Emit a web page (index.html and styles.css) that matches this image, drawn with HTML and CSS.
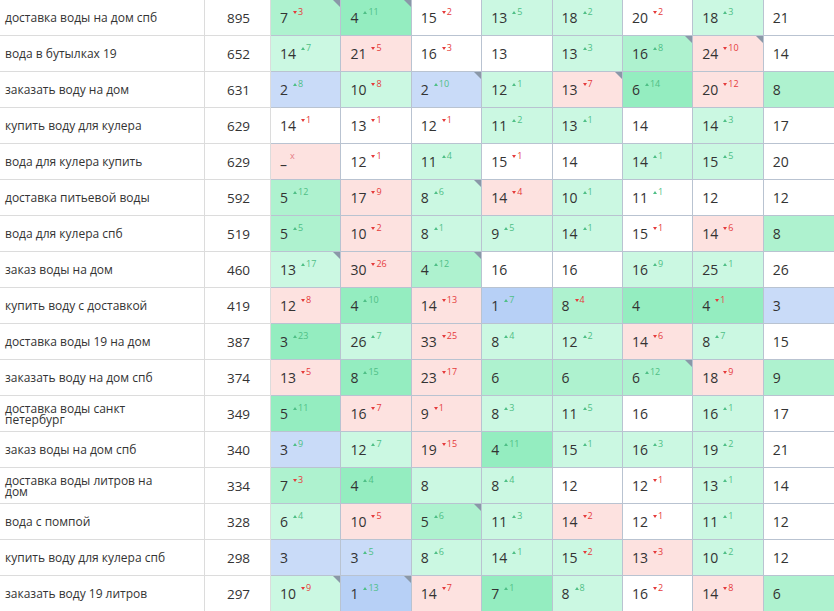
FILE: index.html
```html
<!DOCTYPE html>
<html lang="ru">
<head>
<meta charset="utf-8">
<title>Позиции</title>
<link rel="stylesheet" href="styles.css">
</head>
<body>
<div class="tbl">
  <div class="row"><div class="kw">доставка воды на дом спб</div><div class="vol">895</div>
    <div class="c m k"><span class="n">7</span><span class="s dn">3</span></div>
    <div class="c d k"><span class="n">4</span><span class="s up">11</span></div>
    <div class="c w"><span class="n">15</span><span class="s dn">2</span></div>
    <div class="c l"><span class="n">13</span><span class="s up">5</span></div>
    <div class="c l"><span class="n">18</span><span class="s up">2</span></div>
    <div class="c w"><span class="n">20</span><span class="s dn">2</span></div>
    <div class="c l"><span class="n">18</span><span class="s up">3</span></div>
    <div class="c w"><span class="n">21</span></div>
  </div>
  <div class="row"><div class="kw">вода в бутылках 19</div><div class="vol">652</div>
    <div class="c l"><span class="n">14</span><span class="s up">7</span></div>
    <div class="c p"><span class="n">21</span><span class="s dn">5</span></div>
    <div class="c w"><span class="n">16</span><span class="s dn">3</span></div>
    <div class="c w"><span class="n">13</span></div>
    <div class="c l"><span class="n">13</span><span class="s up">3</span></div>
    <div class="c m k"><span class="n">16</span><span class="s up">8</span></div>
    <div class="c p k"><span class="n">24</span><span class="s dn">10</span></div>
    <div class="c w"><span class="n">14</span></div>
  </div>
  <div class="row"><div class="kw">заказать воду на дом</div><div class="vol">631</div>
    <div class="c b"><span class="n">2</span><span class="s up">8</span></div>
    <div class="c l"><span class="n">10</span><span class="s dn">8</span></div>
    <div class="c b k"><span class="n">2</span><span class="s up">10</span></div>
    <div class="c l"><span class="n">12</span><span class="s up">1</span></div>
    <div class="c p k"><span class="n">13</span><span class="s dn">7</span></div>
    <div class="c d"><span class="n">6</span><span class="s up">14</span></div>
    <div class="c p"><span class="n">20</span><span class="s dn">12</span></div>
    <div class="c m"><span class="n">8</span></div>
  </div>
  <div class="row"><div class="kw">купить воду для кулера</div><div class="vol">629</div>
    <div class="c w"><span class="n">14</span><span class="s dn">1</span></div>
    <div class="c w"><span class="n">13</span><span class="s dn">1</span></div>
    <div class="c w"><span class="n">12</span><span class="s dn">1</span></div>
    <div class="c l"><span class="n">11</span><span class="s up">2</span></div>
    <div class="c l"><span class="n">13</span><span class="s up">1</span></div>
    <div class="c w"><span class="n">14</span></div>
    <div class="c l"><span class="n">14</span><span class="s up">3</span></div>
    <div class="c w"><span class="n">17</span></div>
  </div>
  <div class="row"><div class="kw">вода для кулера купить</div><div class="vol">629</div>
    <div class="c p"><span class="n dash">–</span><span class="s x">x</span></div>
    <div class="c w"><span class="n">12</span><span class="s dn">1</span></div>
    <div class="c l"><span class="n">11</span><span class="s up">4</span></div>
    <div class="c w"><span class="n">15</span><span class="s dn">1</span></div>
    <div class="c w"><span class="n">14</span></div>
    <div class="c l"><span class="n">14</span><span class="s up">1</span></div>
    <div class="c l"><span class="n">15</span><span class="s up">5</span></div>
    <div class="c w"><span class="n">20</span></div>
  </div>
  <div class="row"><div class="kw">доставка питьевой воды</div><div class="vol">592</div>
    <div class="c m"><span class="n">5</span><span class="s up">12</span></div>
    <div class="c p"><span class="n">17</span><span class="s dn">9</span></div>
    <div class="c l k"><span class="n">8</span><span class="s up">6</span></div>
    <div class="c p"><span class="n">14</span><span class="s dn">4</span></div>
    <div class="c l"><span class="n">10</span><span class="s up">1</span></div>
    <div class="c w"><span class="n">11</span><span class="s up">1</span></div>
    <div class="c w"><span class="n">12</span></div>
    <div class="c w"><span class="n">12</span></div>
  </div>
  <div class="row"><div class="kw">вода для кулера спб</div><div class="vol">519</div>
    <div class="c m"><span class="n">5</span><span class="s up">5</span></div>
    <div class="c p"><span class="n">10</span><span class="s dn">2</span></div>
    <div class="c l"><span class="n">8</span><span class="s up">1</span></div>
    <div class="c l"><span class="n">9</span><span class="s up">5</span></div>
    <div class="c l"><span class="n">14</span><span class="s up">1</span></div>
    <div class="c w"><span class="n">15</span><span class="s dn">1</span></div>
    <div class="c p"><span class="n">14</span><span class="s dn">6</span></div>
    <div class="c m"><span class="n">8</span></div>
  </div>
  <div class="row"><div class="kw">заказ воды на дом</div><div class="vol">460</div>
    <div class="c l k"><span class="n">13</span><span class="s up">17</span></div>
    <div class="c p"><span class="n">30</span><span class="s dn">26</span></div>
    <div class="c m k"><span class="n">4</span><span class="s up">12</span></div>
    <div class="c w"><span class="n">16</span></div>
    <div class="c w"><span class="n">16</span></div>
    <div class="c l"><span class="n">16</span><span class="s up">9</span></div>
    <div class="c l"><span class="n">25</span><span class="s up">1</span></div>
    <div class="c w"><span class="n">26</span></div>
  </div>
  <div class="row"><div class="kw">купить воду с доставкой</div><div class="vol">419</div>
    <div class="c p"><span class="n">12</span><span class="s dn">8</span></div>
    <div class="c d"><span class="n">4</span><span class="s up">10</span></div>
    <div class="c p"><span class="n">14</span><span class="s dn">13</span></div>
    <div class="c b1"><span class="n">1</span><span class="s up">7</span></div>
    <div class="c m"><span class="n">8</span><span class="s dn">4</span></div>
    <div class="c d"><span class="n">4</span></div>
    <div class="c d"><span class="n">4</span><span class="s dn">1</span></div>
    <div class="c b"><span class="n">3</span></div>
  </div>
  <div class="row"><div class="kw">доставка воды 19 на дом</div><div class="vol">387</div>
    <div class="c d"><span class="n">3</span><span class="s up">23</span></div>
    <div class="c l"><span class="n">26</span><span class="s up">7</span></div>
    <div class="c p"><span class="n">33</span><span class="s dn">25</span></div>
    <div class="c l"><span class="n">8</span><span class="s up">4</span></div>
    <div class="c l"><span class="n">12</span><span class="s up">2</span></div>
    <div class="c p"><span class="n">14</span><span class="s dn">6</span></div>
    <div class="c l"><span class="n">8</span><span class="s up">7</span></div>
    <div class="c w"><span class="n">15</span></div>
  </div>
  <div class="row"><div class="kw">заказать воду на дом спб</div><div class="vol">374</div>
    <div class="c p"><span class="n">13</span><span class="s dn">5</span></div>
    <div class="c d"><span class="n">8</span><span class="s up">15</span></div>
    <div class="c p"><span class="n">23</span><span class="s dn">17</span></div>
    <div class="c m"><span class="n">6</span></div>
    <div class="c m"><span class="n">6</span></div>
    <div class="c m k"><span class="n">6</span><span class="s up">12</span></div>
    <div class="c p"><span class="n">18</span><span class="s dn">9</span></div>
    <div class="c m"><span class="n">9</span></div>
  </div>
  <div class="row"><div class="kw">доставка воды санкт петербург</div><div class="vol">349</div>
    <div class="c d"><span class="n">5</span><span class="s up">11</span></div>
    <div class="c p"><span class="n">16</span><span class="s dn">7</span></div>
    <div class="c p"><span class="n">9</span><span class="s dn">1</span></div>
    <div class="c l"><span class="n">8</span><span class="s up">3</span></div>
    <div class="c l"><span class="n">11</span><span class="s up">5</span></div>
    <div class="c w"><span class="n">16</span></div>
    <div class="c l"><span class="n">16</span><span class="s up">1</span></div>
    <div class="c w"><span class="n">17</span></div>
  </div>
  <div class="row"><div class="kw">заказ воды на дом спб</div><div class="vol">340</div>
    <div class="c b"><span class="n">3</span><span class="s up">9</span></div>
    <div class="c l"><span class="n">12</span><span class="s up">7</span></div>
    <div class="c p"><span class="n">19</span><span class="s dn">15</span></div>
    <div class="c d"><span class="n">4</span><span class="s up">11</span></div>
    <div class="c l"><span class="n">15</span><span class="s up">1</span></div>
    <div class="c l"><span class="n">16</span><span class="s up">3</span></div>
    <div class="c l"><span class="n">19</span><span class="s up">2</span></div>
    <div class="c w"><span class="n">21</span></div>
  </div>
  <div class="row"><div class="kw">доставка воды литров на дом</div><div class="vol">334</div>
    <div class="c m"><span class="n">7</span><span class="s dn">3</span></div>
    <div class="c d"><span class="n">4</span><span class="s up">4</span></div>
    <div class="c l"><span class="n">8</span></div>
    <div class="c l"><span class="n">8</span><span class="s up">4</span></div>
    <div class="c w"><span class="n">12</span></div>
    <div class="c w"><span class="n">12</span><span class="s dn">1</span></div>
    <div class="c l"><span class="n">13</span><span class="s up">1</span></div>
    <div class="c w"><span class="n">14</span></div>
  </div>
  <div class="row"><div class="kw">вода с помпой</div><div class="vol">328</div>
    <div class="c l"><span class="n">6</span><span class="s up">4</span></div>
    <div class="c p"><span class="n">10</span><span class="s dn">5</span></div>
    <div class="c m k"><span class="n">5</span><span class="s up">6</span></div>
    <div class="c l"><span class="n">11</span><span class="s up">3</span></div>
    <div class="c p"><span class="n">14</span><span class="s dn">2</span></div>
    <div class="c w"><span class="n">12</span><span class="s dn">1</span></div>
    <div class="c l"><span class="n">11</span><span class="s up">1</span></div>
    <div class="c w"><span class="n">12</span></div>
  </div>
  <div class="row"><div class="kw">купить воду для кулера спб</div><div class="vol">298</div>
    <div class="c b"><span class="n">3</span></div>
    <div class="c b"><span class="n">3</span><span class="s up">5</span></div>
    <div class="c l"><span class="n">8</span><span class="s up">6</span></div>
    <div class="c l"><span class="n">14</span><span class="s up">1</span></div>
    <div class="c l"><span class="n">15</span><span class="s dn">2</span></div>
    <div class="c p"><span class="n">13</span><span class="s dn">3</span></div>
    <div class="c l"><span class="n">10</span><span class="s up">2</span></div>
    <div class="c w"><span class="n">12</span></div>
  </div>
  <div class="row"><div class="kw">заказать воду 19 литров</div><div class="vol">297</div>
    <div class="c l k"><span class="n">10</span><span class="s dn">9</span></div>
    <div class="c b1 k"><span class="n">1</span><span class="s up">13</span></div>
    <div class="c p"><span class="n">14</span><span class="s dn">7</span></div>
    <div class="c d"><span class="n">7</span><span class="s up">1</span></div>
    <div class="c l"><span class="n">8</span><span class="s up">8</span></div>
    <div class="c w"><span class="n">16</span><span class="s dn">2</span></div>
    <div class="c p"><span class="n">14</span><span class="s dn">8</span></div>
    <div class="c m"><span class="n">6</span></div>
  </div>
</div>
</body>
</html>
```

FILE: styles.css
```css
html, body {
  margin: 0;
  padding: 0;
  background: #ffffff;
}
body {
  font-family: "Open Sans", "Noto Sans", sans-serif;
  color: #333;
  overflow: hidden;
}
.tbl {
  width: 834px;
}
.row {
  display: grid;
  grid-template-columns: 205px 66px repeat(8, 1fr);
  height: 36px;
}
.row > div {
  box-sizing: border-box;
  border-right: 1px solid #dcdcdc;
  border-bottom: 1px solid #dcdcdc;
  display: flex;
  align-items: center;
}
.kw {
  font-size: 12px;
  line-height: 11px;
  padding-left: 5px;
  padding-right: 30px;
}
.vol {
  justify-content: center;
  font-size: 13.5px;
  padding-left: 2px;
}
.row > .c {
  position: relative;
  border-color: #b9c3d1;
  padding-left: 9px;
}
.row > .c:last-child {
  border-right: none;
}
.n {
  font-size: 14px;
  line-height: 16px;
  color: #333;
}
.dash {
  position: relative;
  top: 3px;
}
.s {
  align-self: flex-start;
  margin-top: 7px;
  margin-left: 5px;
  font-size: 9px;
  line-height: 10px;
  display: inline-flex;
  align-items: center;
}
.s::before {
  content: "";
  display: inline-block;
  width: 0;
  height: 0;
  border-left: 2px solid transparent;
  border-right: 2px solid transparent;
  margin-right: 1px;
}
.up { color: #4fbf86; }
.up::before { border-bottom: 3px solid #4fbf86; }
.dn { color: #e53b3b; }
.dn::before { border-top: 3px solid #e53b3b; }
.x { color: #e57a86; margin-left: 3px; }
.x::before { display: none; }

.w { background: #ffffff; }
.l { background: #cbf8e2; }
.m { background: #aef2cf; }
.d { background: #94edc0; }
.b { background: #c9dbf8; }
.b1 { background: #b7d0f6; }
.p { background: #fde2e0; }

.k::after {
  content: "";
  position: absolute;
  top: 0;
  right: 0;
  width: 0;
  height: 0;
  border-top: 7px solid #8a98a8;
  border-left: 7px solid transparent;
}
```
